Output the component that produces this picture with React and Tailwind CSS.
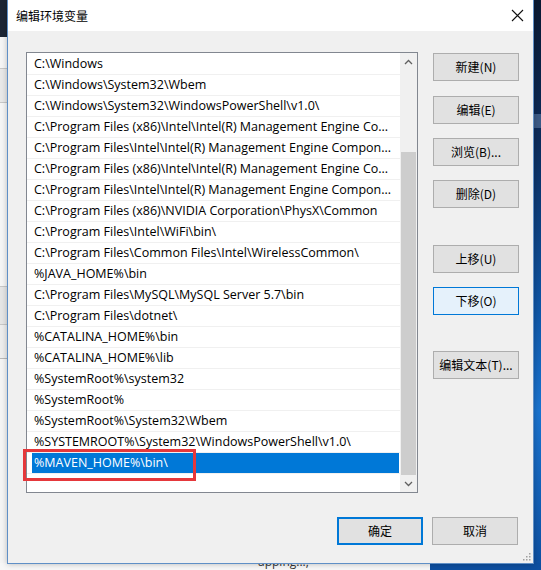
import React from "react";

const rows = [
  "C:\\Windows",
  "C:\\Windows\\System32\\Wbem",
  "C:\\Windows\\System32\\WindowsPowerShell\\v1.0\\",
  "C:\\Program Files (x86)\\Intel\\Intel(R) Management Engine Co...",
  "C:\\Program Files\\Intel\\Intel(R) Management Engine Compon...",
  "C:\\Program Files (x86)\\Intel\\Intel(R) Management Engine Co...",
  "C:\\Program Files\\Intel\\Intel(R) Management Engine Compon...",
  "C:\\Program Files (x86)\\NVIDIA Corporation\\PhysX\\Common",
  "C:\\Program Files\\Intel\\WiFi\\bin\\",
  "C:\\Program Files\\Common Files\\Intel\\WirelessCommon\\",
  "%JAVA_HOME%\\bin",
  "C:\\Program Files\\MySQL\\MySQL Server 5.7\\bin",
  "C:\\Program Files\\dotnet\\",
  "%CATALINA_HOME%\\bin",
  "%CATALINA_HOME%\\lib",
  "%SystemRoot%\\system32",
  "%SystemRoot%",
  "%SystemRoot%\\System32\\Wbem",
  "%SYSTEMROOT%\\System32\\WindowsPowerShell\\v1.0\\",
  "%MAVEN_HOME%\\bin\\",
];

const FONT = "font-['Open_Sans','Noto_Sans_CJK_SC',sans-serif]";

function Btn({ children, className = "", variant = "normal" }) {
  const styles =
    variant === "focus"
      ? "bg-[#e5f1fb] border border-[#0078d7]"
      : variant === "default"
      ? "bg-[#e1e1e1] border-2 border-[#0078d7]"
      : "bg-[#e1e1e1] border border-[#adadad]";
  return (
    <div
      className={`w-[86px] h-[28px] flex items-center justify-center text-[12px] text-black ${styles} ${className}`}
    >
      {children}
    </div>
  );
}

function Chevron({ up }) {
  return (
    <svg width="9" height="6" viewBox="0 0 9 6">
      <path
        d={up ? "M1 5 L4.5 1.5 L8 5" : "M1 1 L4.5 4.5 L8 1"}
        fill="none"
        stroke="#606060"
        strokeWidth="1.3"
      />
    </svg>
  );
}

export default function App() {
  return (
    <div className={`relative w-[541px] h-[570px] overflow-hidden bg-[#f3f3f3] ${FONT}`}>
      {/* desktop background: left strip */}
      <div className="absolute left-0 top-0 w-[8px] h-[570px] flex flex-col">
        <div className="h-[37px] bg-[#1d2635]" />
        <div className="h-[32px] bg-[#f6f6f6] border-b border-[#c8c8c8]" />
        <div className="h-[34px] bg-[#e9e9e9] border-b border-[#c8c8c8]" />
        <div className="h-[184px] bg-[#f6f6f6] border-b border-[#c8c8c8]" />
        <div className="h-[38px] bg-[#e6e6e6] border-b border-[#c8c8c8]" />
        <div className="h-[34px] bg-[#eeeeee] border-b border-[#b8b8b8]" />
        <div className="flex-1 bg-[#f5f5f5]" />
      </div>
      {/* right strip */}
      <div className="absolute right-0 top-0 w-[8px] h-[570px] bg-[linear-gradient(to_bottom,#0b1a33_0%,#0c2c5c_25%,#0f57a8_55%,#1a73cf_72%,#0d4fa0_100%)]">
        <div className="absolute left-[1px] top-[114px] w-[7px] h-[14px] bg-[#3b5a86]" />
      </div>
      {/* bottom strip */}
      <div className="absolute left-0 bottom-0 w-[541px] h-[7px] flex">
        <div className="w-[430px] bg-[#f7f7f7] relative overflow-hidden">
          <span className="absolute left-[258px] top-[-8px] text-[12px] leading-[14px] text-[#333]">apping...,</span>
        </div>
        <div className="flex-1 bg-[#0d4fa0]" />
      </div>

      {/* dialog window */}
      <div className="absolute left-[7px] top-0 w-[527px] h-[564px] border-x border-b border-[#5f8fc6] bg-[#f0f0f0] flex flex-col shadow-[0_0_6px_rgba(0,0,0,0.25)]">
        {/* title bar */}
        <div className="h-[31px] bg-white flex items-center justify-between pl-[8px] pr-[9px]">
          <span className="text-[12px] text-black font-['Noto_Sans_CJK_SC',sans-serif]">编辑环境变量</span>
          <svg width="13" height="13" viewBox="0 0 13 13">
            <path d="M1 1 L12 12 M12 1 L1 12" stroke="#111" strokeWidth="1.1" />
          </svg>
        </div>

        {/* body */}
        <div className="flex pl-[18px] pt-[21px]">
          {/* list box */}
          <div className="relative w-[392px] h-[441px] border border-[#828790] bg-white flex">
            <div className="flex-1 flex flex-col pt-[1px]">
              {rows.map((r, i) => {
                const sel = i === rows.length - 1;
                return (
                  <div
                    key={i}
                    className="h-[21px] border-b border-[#f0f0f0] flex items-stretch pl-[5px]"
                  >
                    <div
                      className={`flex-1 flex items-center pl-[2px] pt-[1px] text-[12.5px] whitespace-nowrap overflow-hidden ${
                        sel ? "bg-[#0078d7] text-white mr-[1px]" : "text-black"
                      }`}
                    >
                      {r}
                    </div>
                  </div>
                );
              })}
            </div>
            {/* scrollbar */}
            <div className="w-[17px] bg-[#f0f0f0] flex flex-col">
              <div className="h-[17px] flex items-center justify-center">
                <Chevron up />
              </div>
              <div className="h-[82px]" />
              <div className="h-[323px] bg-[#cdcdcd] mx-[1px]" />
              <div className="flex-1 flex items-center justify-center">
                <Chevron />
              </div>
            </div>
            {/* annotation box */}
            <div className="absolute left-[-4px] top-[396px] w-[173px] h-[32px] border-[3px] border-[#e5383b]" />
          </div>

          {/* button column */}
          <div className="flex flex-col ml-[15px] pt-[1px] font-['Noto_Sans_CJK_SC',sans-serif]">
            <Btn>新建(N)</Btn>
            <Btn className="mt-[15px]">编辑(E)</Btn>
            <Btn className="mt-[14px]">浏览(B)...</Btn>
            <Btn className="mt-[14px]">删除(D)</Btn>
            <Btn className="mt-[37px]">上移(U)</Btn>
            <Btn className="mt-[14px]" variant="focus">下移(O)</Btn>
            <Btn className="mt-[36px]">编辑文本(T)...</Btn>
          </div>
        </div>

        {/* bottom buttons */}
        <div className="flex justify-end gap-[9px] pr-[15px] mt-[24px] font-['Noto_Sans_CJK_SC',sans-serif]">
          <Btn variant="default">确定</Btn>
          <Btn>取消</Btn>
        </div>

        {/* size grip */}
        <div className="flex-1 relative">
          <svg className="absolute right-[2px] bottom-[2px]" width="10" height="10" viewBox="0 0 10 10">
            {[[8, 2], [8, 5], [5, 5], [8, 8], [5, 8], [2, 8]].map(([x, y], i) => (
              <rect key={i} x={x} y={y} width="1.5" height="1.5" fill="#a0a0a0" />
            ))}
          </svg>
        </div>
      </div>
    </div>
  );
}
